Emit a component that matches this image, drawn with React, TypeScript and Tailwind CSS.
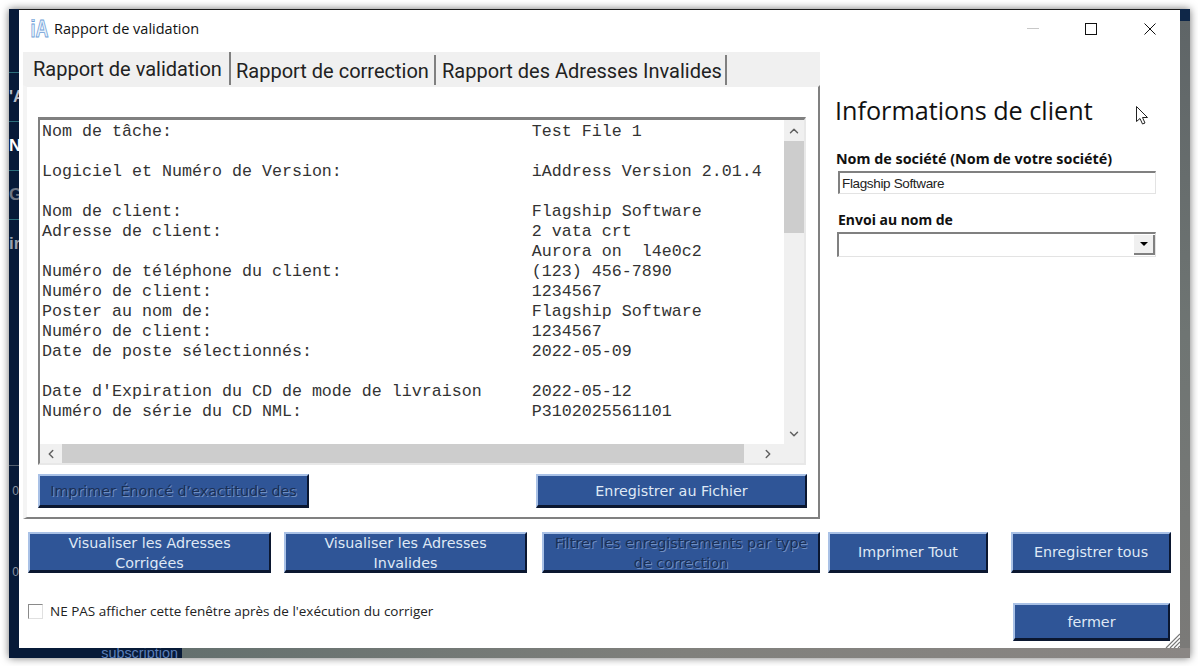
import { ChevronUp, ChevronDown, ChevronLeft, ChevronRight } from "lucide-react";

const lines: [string, string][] = [
  ["Nom de tâche:", "Test File 1"],
  ["", ""],
  ["Logiciel et Numéro de Version:", "iAddress Version 2.01.4"],
  ["", ""],
  ["Nom de client:", "Flagship Software"],
  ["Adresse de client:", "2 vata crt"],
  ["", "Aurora on  l4e0c2"],
  ["Numéro de téléphone du client:", "(123) 456-7890"],
  ["Numéro de client:", "1234567"],
  ["Poster au nom de:", "Flagship Software"],
  ["Numéro de client:", "1234567"],
  ["Date de poste sélectionnés:", "2022-05-09"],
  ["", ""],
  ["Date d'Expiration du CD de mode de livraison", "2022-05-12"],
  ["Numéro de série du CD NML:", "P3102025561101"],
];

const report = lines.map(([a, b]) => a.padEnd(49) + b).join("\n");

function Btn({ className, disabled, children }: { className: string; disabled?: boolean; children: React.ReactNode }) {
  return (
    <div
      className={`shrink-0 flex items-center justify-center overflow-hidden text-center bg-[#2f5597] border-t-2 border-l-2 border-r-2 border-b-[3px] border-t-[#a9c1e6] border-l-[#a9c1e6] border-r-[#0b1730] border-b-[#0b1730] font-['DejaVu_Sans',sans-serif] text-[14.3px] leading-[20px] ${
        disabled ? "text-[#1a2f55] [text-shadow:1px_1px_0_#6f8fc2]" : "text-[#dfe8f5]"
      } ${className}`}
    >
      {children}
    </div>
  );
}

function Tab({ className, children }: { className: string; children: React.ReactNode }) {
  return (
    <div className={`flex items-center whitespace-nowrap border-r-2 border-r-[#808080] font-['Roboto',sans-serif] text-[#222] text-[20px] ${className}`}>
      {children}
    </div>
  );
}

export default function App() {
  return (
    <div className="w-[1198px] h-[666px] bg-white p-[9px] pr-[8px] overflow-hidden font-['Open_Sans',sans-serif]">
      <div className="w-[1181px] h-[649px] flex flex-col shadow-[0_0_8px_rgba(0,0,0,0.55)]">
        <div className="flex h-[639px]">
          {/* desktop behind, left */}
          <div className="w-[10px] shrink-0 bg-[#071a38] flex flex-col items-end overflow-hidden font-['Liberation_Sans',sans-serif] font-bold text-[17px] text-[#b8bfca] leading-[48px]">
            <div className="h-[64px] w-full shrink-0 border-b border-b-[#2d6f7c]" />
            <div className="h-[49px] w-full shrink-0 border-b border-b-[#2d6f7c] whitespace-nowrap text-right">'A</div>
            <div className="h-[49px] w-full shrink-0 border-b border-b-[#2d6f7c] whitespace-nowrap text-right text-white">N</div>
            <div className="h-[49px] w-full shrink-0 border-b border-b-[#2d6f7c] whitespace-nowrap text-right text-[#6f7785]">G</div>
            <div className="h-[49px] w-full shrink-0 whitespace-nowrap text-right text-[#98a0ad]">ir</div>
            <div className="h-[197px] w-full shrink-0 border-b border-b-[#54606f]" />
            <div className="h-[99px] w-full shrink-0 text-[12px] font-normal text-[#8b93a0] text-right leading-[50px]">0</div>
            <div className="h-[60px] w-full shrink-0 text-[12px] font-normal text-[#8b93a0] text-right leading-[14px]">0</div>
          </div>

          {/* window */}
          <div className="relative w-[1161px] shrink-0 bg-white border-t border-t-[#1b1b1b] flex flex-col">
            {/* title bar */}
            <div className="h-[42px] shrink-0 flex items-center pl-[11px] pb-[5px]">
              <svg width="19" height="20" viewBox="0 0 19 20" className="shrink-0">
                <text x="0.5" y="18" fontFamily="Liberation Sans" fontSize="23" fontWeight="700" fill="#e9f2fb" stroke="#6f9fd8" strokeWidth="0.9" textLength="18" lengthAdjust="spacingAndGlyphs">iA</text>
              </svg>
              <span className="ml-[5px] text-[14.5px] text-[#111] whitespace-nowrap font-['Open_Sans',sans-serif]">Rapport de validation</span>
              <div className="ml-auto flex items-center">
                <div className="w-[12px] h-px bg-[#c8c8c8]" />
                <div className="ml-[46px] w-[12px] h-[12px] border border-[#111]" />
                <svg width="12" height="12" viewBox="0 0 12 12" className="ml-[47px] mr-[24px]">
                  <path d="M0.5 0.5 L11.5 11.5 M11.5 0.5 L0.5 11.5" stroke="#111" strokeWidth="1" />
                </svg>
              </div>
            </div>

            {/* main row */}
            <div className="h-[467px] shrink-0 flex">
              <div className="ml-[4px] w-[797px] shrink-0 flex flex-col">
                <div className="h-[33px] shrink-0 bg-[#f0f0f0] flex items-stretch">
                  <Tab className="w-[208px] pl-[10px]">Rapport de validation</Tab>
                  <Tab className="w-[204px] pl-[4px] mt-[3px] pt-[2px] ml-[1px]">Rapport de correction</Tab>
                  <Tab className="w-[290px] pl-[5px] mt-[3px] pt-[2px] ml-[1px]">Rapport des Adresses Invalides</Tab>
                </div>
                <div className="h-[434px] shrink-0 bg-white border-l-[4px] border-l-[#f4f4f4] border-t-2 border-t-[#f0f0f0] border-r-2 border-r-[#808080] border-b-2 border-b-[#808080] pt-[30px] pl-[11px] flex flex-col">
                  <div className="w-[768px] h-[348px] shrink-0 border-t-[3px] border-l-2 border-t-[#808080] border-l-[#808080] border-r-2 border-b-2 border-r-[#e8e8e8] border-b-[#e8e8e8] flex flex-col">
                    <div className="h-[324px] shrink-0 flex">
                      <pre className="flex-1 overflow-hidden pl-[2px] pt-[2px] m-0 text-[16.67px] leading-[20px] text-[#333] font-['Liberation_Mono',monospace] whitespace-pre">{report}</pre>
                      <div className="w-[20px] shrink-0 bg-[#f0f0f0] flex flex-col items-center">
                        <div className="h-[21px] w-full flex items-center justify-center">
                          <ChevronUp size={14} strokeWidth={2.5} className="text-[#606060]" />
                        </div>
                        <div className="h-[92px] w-full bg-[#cdcdcd]" />
                        <div className="mt-auto h-[21px] w-full flex items-center justify-center">
                          <ChevronDown size={14} strokeWidth={2.5} className="text-[#606060]" />
                        </div>
                      </div>
                    </div>
                    <div className="h-[19px] shrink-0 flex bg-[#f0f0f0]">
                      <div className="w-[22px] flex items-center justify-center">
                        <ChevronLeft size={14} strokeWidth={2.5} className="text-[#606060]" />
                      </div>
                      <div className="w-[682px] bg-[#cdcdcd]" />
                      <div className="w-[58px] flex items-center pl-[17px]">
                        <ChevronRight size={14} strokeWidth={2.5} className="text-[#606060]" />
                      </div>
                    </div>
                  </div>
                  <div className="w-[769px] mt-[9px] flex justify-between">
                    <Btn disabled className="w-[271px] h-[34px]">Imprimer Énoncé d’exactitude des</Btn>
                    <Btn className="w-[271px] h-[34px]">Enregistrer au Fichier</Btn>
                  </div>
                </div>
              </div>

              {/* right column */}
              <div className="relative flex-1 pl-[15px]">
                <div className="mt-[40px] h-[36px] text-[25.2px] leading-[36px] text-[#111] whitespace-nowrap font-['Open_Sans',sans-serif]">Informations de client</div>
                <div className="mt-[22px] ml-[1px] h-[18px] text-[14.3px] leading-[18px] font-bold text-[#111] whitespace-nowrap font-['Noto_Sans',sans-serif]">Nom de société (Nom de votre société)</div>
                <div className="mt-[3px] ml-[3px] w-[318px] h-[23px] border-t-2 border-l-2 border-t-[#808080] border-l-[#808080] border-r border-b border-r-[#e3e3e3] border-b-[#e3e3e3] pl-[2px] text-[13.5px] leading-[22px] tracking-[-0.35px] text-[#222] font-['Liberation_Sans',sans-serif] whitespace-nowrap">Flagship Software</div>
                <div className="mt-[17px] ml-[3px] h-[18px] text-[14px] leading-[18px] font-bold text-[#111] whitespace-nowrap font-['Noto_Sans',sans-serif]">Envoi au nom de</div>
                <div className="mt-[3px] ml-[2px] w-[319px] h-[25px] border-t-2 border-l-2 border-t-[#808080] border-l-[#808080] border-r border-b border-r-[#e3e3e3] border-b-[#e3e3e3] flex justify-end">
                  <div className="mt-px w-[21px] h-[20px] bg-[#f0f0f0] border-r-2 border-b-2 border-r-[#808080] border-b-[#808080] flex items-center justify-center">
                    <div className="w-0 h-0 border-l-[4px] border-r-[4px] border-t-[4px] border-l-transparent border-r-transparent border-t-black" />
                  </div>
                </div>
                {/* mouse pointer over the window */}
                <svg width="13" height="19" viewBox="0 0 13 19" className="absolute left-[316px] top-[54px]">
                  <path d="M0.5 0.5 V15.5 L4 12.5 L6.5 18 L9 17 L6.5 11.5 L11.5 11.5 Z" fill="#fff" stroke="#222" strokeWidth="1" />
                </svg>
              </div>
            </div>

            {/* bottom button row */}
            <div className="mt-[13px] ml-[9px] h-[41px] shrink-0 flex">
              <Btn className="w-[243px] h-[41px] pt-[2px]">
                Visualiser les Adresses
                <br />
                Corrigées
              </Btn>
              <Btn className="ml-[13px] w-[243px] h-[41px] pt-[2px]">
                Visualiser les Adresses
                <br />
                Invalides
              </Btn>
              <Btn disabled className="ml-[15px] w-[278px] h-[41px] pt-[2px] whitespace-nowrap">
                Filtrer les enregistrements par type
                <br />
                de correction
              </Btn>
              <Btn className="ml-[8px] w-[160px] h-[41px]">Imprimer Tout</Btn>
              <Btn className="ml-[23px] w-[160px] h-[41px]">Enregistrer tous</Btn>
            </div>

            {/* last row */}
            <div className="flex-1 flex items-start pl-[9px] pr-[10px]">
              <div className="mt-[31px] w-[15px] h-[15px] shrink-0 border border-[#8a8a8a] border-r-[#e0e0e0] border-b-[#e0e0e0] bg-white" />
              <span className="mt-[28px] ml-[7px] text-[13.5px] leading-[20px] text-[#222] whitespace-nowrap font-['Open_Sans',sans-serif]">NE PAS afficher cette fenêtre après de l'exécution du corriger</span>
              <Btn className="ml-auto mt-[30px] w-[157px] h-[38px]">fermer</Btn>
            </div>

            {/* resize grip */}
            <svg width="16" height="16" viewBox="0 0 16 16" className="absolute right-0 bottom-0">
              <path d="M2 16 L16 2 M6 16 L16 6 M10 16 L16 10 M14 16 L16 14" stroke="#777" strokeWidth="1.2" />
            </svg>
          </div>

          {/* desktop behind, right */}
          <div className="w-[10px] shrink-0 flex flex-col">
            <div className="h-[12px] bg-[#0f2748]" />
            <div className="flex-1 bg-gradient-to-b from-[#5f6567] via-[#6f7573] to-[#7b7a78]" />
          </div>
        </div>

        {/* desktop behind, bottom */}
        <div className="h-[10px] flex shrink-0 overflow-hidden">
          <div className="w-[173px] shrink-0 bg-[#071a38] flex justify-end pr-[4px]">
            <span className="text-[14.4px] leading-[16px] -mt-[3px] text-[#5b7fb8] font-['Liberation_Sans',sans-serif]">subscription</span>
          </div>
          <div className="flex-1 bg-gradient-to-r from-[#64706e] via-[#80807c] to-[#8a8684]" />
        </div>
      </div>
    </div>
  );
}
